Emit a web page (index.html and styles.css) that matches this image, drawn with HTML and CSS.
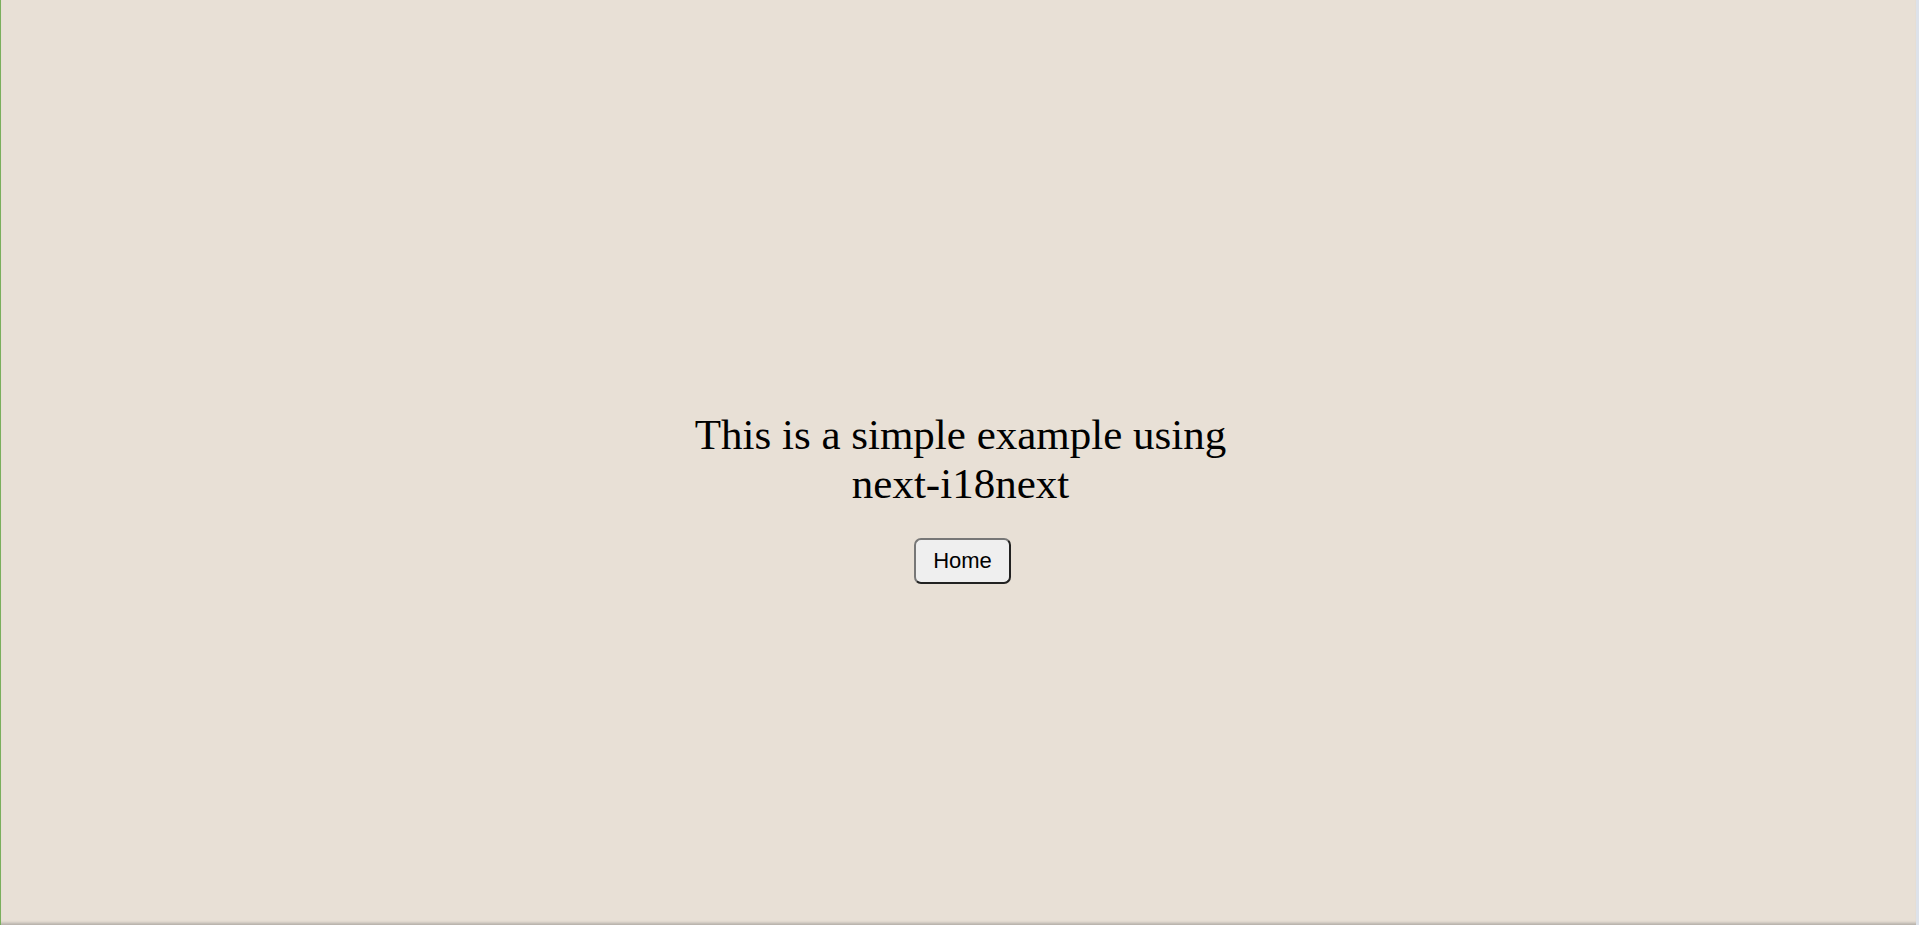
FILE: index.html
```html
<!DOCTYPE html>
<html lang="en">
<head>
<meta charset="utf-8">
<title>next-i18next example</title>
<link rel="stylesheet" href="styles.css">
</head>
<body>
<div class="frame">
  <main class="page">
    <h1 class="title">This is a simple example using next-i18next</h1>
    <button class="home-btn" type="button">Home</button>
  </main>
</div>
</body>
</html>
```

FILE: styles.css
```css
html, body {
  margin: 0;
  padding: 0;
  height: 100%;
}

body {
  background: #e8e0d6;
  font-family: "Liberation Serif", "Times New Roman", serif;
  color: #000;
}

.frame {
  box-sizing: border-box;
  height: 100vh;
  border-left: 1px solid #7aaf5c;
  border-right: 3px solid #dde2ea;
  box-shadow: inset 0 -4px 3px -2px rgba(80, 80, 80, 0.35);
  display: flex;
}

.page {
  flex: 1;
  display: flex;
  flex-direction: column;
  align-items: center;
  justify-content: center;
  padding-top: 70px;
  padding-left: 4px;
}

.title {
  margin: 0;
  max-width: 560px;
  font-size: 43px;
  font-weight: normal;
  text-align: center;
  line-height: 1.13;
}

.home-btn {
  margin-top: 30px;
  margin-left: 4px;
  font-family: "Liberation Sans", Arial, sans-serif;
  font-size: 22px;
  color: #000;
  background: #efefef;
  border: 2px solid;
  border-color: #777 #222 #222 #777;
  border-radius: 7px;
  padding: 8px 17px;
  line-height: 1.15;
  cursor: pointer;
}
```
